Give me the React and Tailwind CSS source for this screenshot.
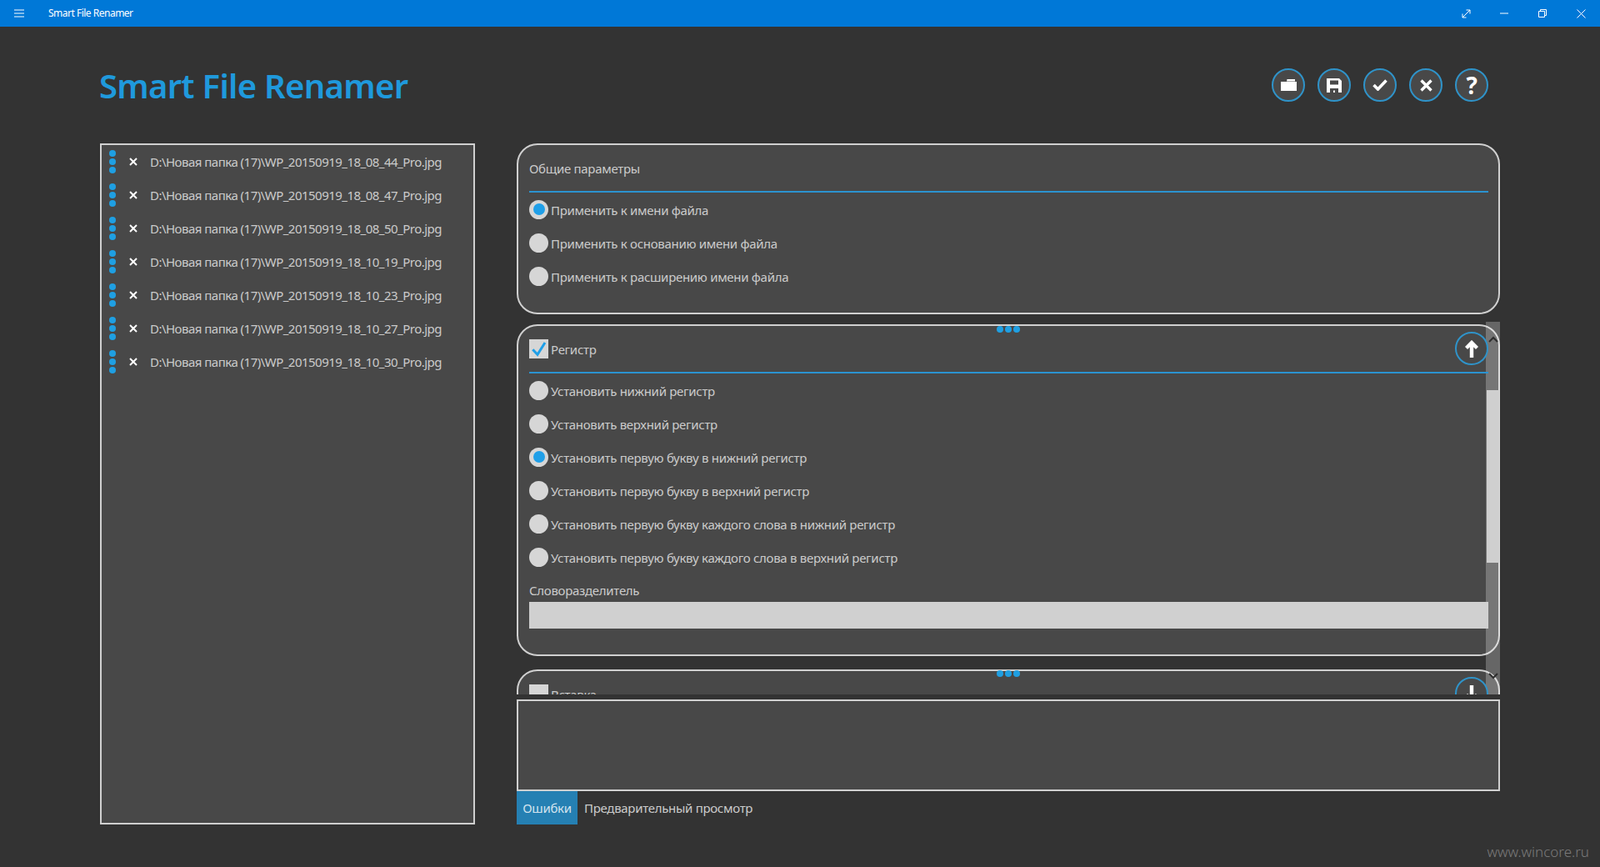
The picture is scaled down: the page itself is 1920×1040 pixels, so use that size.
const files = ["18_08_44", "18_08_47", "18_08_50", "18_10_19", "18_10_23", "18_10_27", "18_10_30"];

function Dots({ vertical }) {
  return (
    <div className={vertical ? "flex flex-col gap-[2px]" : "flex gap-[2px]"}>
      <span className="block size-2 rounded-full bg-[#1f9fe2]" />
      <span className="block size-2 rounded-full bg-[#1f9fe2]" />
      <span className="block size-2 rounded-full bg-[#1f9fe2]" />
    </div>
  );
}

function RoundButton({ children }) {
  return (
    <div className="relative z-10 flex size-10 items-center justify-center rounded-full border-2 border-[#2f93c9] bg-[#484848] text-white">
      {children}
    </div>
  );
}

function Radio({ label, checked }) {
  return (
    <div className="flex h-10 items-center gap-[3px]">
      <span className="flex size-[23px] shrink-0 items-center justify-center rounded-full bg-[#d6d6d6]">
        {checked && <span className="block size-[14px] rounded-full bg-[#1f9fe8]" />}
      </span>
      <span className="pt-px">{label}</span>
    </div>
  );
}

function Check({ checked }) {
  return (
    <span className="block size-[23px] shrink-0 bg-[#d6d6d6]">
      {checked && (
        <svg viewBox="0 0 23 23" className="size-[23px]">
          <path d="M4.3 12.3L10 18.3L19 4" fill="none" stroke="#1f9fe8" strokeWidth="3" />
        </svg>
      )}
    </span>
  );
}

function Arrow({ down }) {
  return (
    <svg viewBox="0 0 16 21" className={down ? "h-[21px] w-4 rotate-180" : "h-[21px] w-4"}>
      <path d="M8 21V3M1.5 9.5L8 3L14.5 9.5" fill="none" stroke="#fff" strokeWidth="4.4" />
    </svg>
  );
}

function GroupHeader({ label, checked, down }) {
  return (
    <div className="relative z-10 flex h-[57px] items-center gap-[3px] border-b-2 border-[#2b93d0] pb-px">
      <Check checked={checked} />
      <span className="flex-1 pt-[2px]">{label}</span>
      <RoundButton><Arrow down={down} /></RoundButton>
    </div>
  );
}

export default function App() {
  return (
    <div className="relative h-[1040px] w-full overflow-hidden bg-[#333333] text-[15px] leading-5 tracking-[-0.3px] text-[#cbcbcb] [font-family:'Open_Sans','Noto_Sans',sans-serif]">
      <div className="flex h-8 items-center bg-[#0078d7] text-white">
        <div className="flex h-8 w-[46px] items-center justify-center">
          <svg viewBox="0 0 12 10" className="h-[10px] w-3">
            <path d="M0 1H12M0 5H12M0 9H12" stroke="#fff" strokeWidth="1" />
          </svg>
        </div>
        <span className="ml-3 flex-1 text-xs tracking-[-0.5px]">Smart File Renamer</span>
        <div className="flex h-8 w-[46px] items-center justify-center">
          <svg viewBox="0 0 11 11" className="size-[11px]">
            <path d="M1 10L10 1M5.5 1H10V5.5M1 5.5V10H5.5" fill="none" stroke="#fff" strokeWidth="1" />
          </svg>
        </div>
        <div className="flex h-8 w-[46px] items-center justify-center">
          <svg viewBox="0 0 10 2" className="h-[2px] w-[10px]">
            <path d="M0 1H10" stroke="#fff" strokeWidth="1" />
          </svg>
        </div>
        <div className="flex h-8 w-[46px] items-center justify-center">
          <svg viewBox="0 0 10 10" className="size-[10px]">
            <path d="M.5 2.5H7.5V9.5H.5ZM2.5 2.5V.5H9.5V7.5H7.5" fill="none" stroke="#fff" strokeWidth="1" />
          </svg>
        </div>
        <div className="flex h-8 w-[46px] items-center justify-center">
          <svg viewBox="0 0 11 11" className="size-[11px]">
            <path d="M.5 .5L10.5 10.5M10.5 .5L.5 10.5" stroke="#fff" strokeWidth="1" />
          </svg>
        </div>
      </div>

      <div className="flex h-[140px] items-center justify-between pr-[134px] pl-[119px]">
        <h1 className="pt-[2px] text-[40px] leading-none font-semibold tracking-[-0.7px] text-[#1f99dc]">Smart File Renamer</h1>
        <div className="flex gap-[15px]">
          <RoundButton>
            <svg viewBox="0 0 19 14" className="h-[14px] w-[19px]">
              <path d="M7.5 0H17V2.4H7Z M0 3H19V14H0Z" fill="#fff" />
            </svg>
          </RoundButton>
          <RoundButton>
            <svg viewBox="0 0 18 17" className="h-[17px] w-[18px]">
              <path fillRule="evenodd" d="M0 0H15L18 3V17H0ZM4 2.5V7.5H14V2.5ZM4 12V17H14V12Z" fill="#fff" />
              <path d="M8 14.5H10V17H8Z" fill="#fff" />
            </svg>
          </RoundButton>
          <RoundButton>
            <svg viewBox="0 0 18 14" className="h-[14px] w-[18px]">
              <path d="M1.5 7L6.5 12L16.5 1.5" fill="none" stroke="#fff" strokeWidth="3.6" />
            </svg>
          </RoundButton>
          <RoundButton>
            <svg viewBox="0 0 15 15" className="size-[15px]">
              <path d="M1.5 1.5L13.5 13.5M13.5 1.5L1.5 13.5" stroke="#fff" strokeWidth="3.4" />
            </svg>
          </RoundButton>
          <RoundButton>
            <span className="text-[28px] leading-none font-bold">?</span>
          </RoundButton>
        </div>
      </div>

      <div className="flex gap-[50px] pl-[120px]">
        <div className="h-[817px] w-[450px] border-2 border-[#d0d0d0] bg-[#484848]">
          {files.map((f) => (
            <div key={f} className="flex h-10 items-center">
              <div className="ml-[9px]"><Dots vertical /></div>
              <svg viewBox="0 0 10 10" className="ml-4 size-[10px]">
                <path d="M1 1L9 9M9 1L1 9" stroke="#fff" strokeWidth="2" />
              </svg>
              <span className="ml-[15px] whitespace-nowrap tracking-[-0.52px]">{`D:\\Новая папка (17)\\WP_20150919_${f}_Pro.jpg`}</span>
            </div>
          ))}
        </div>

        <div className="w-[1180px]">
          <div className="h-[205px] rounded-[25px] border-2 border-[#d0d0d0] bg-[#484848] pr-3 pl-[13px]">
            <div className="flex h-[57px] items-center border-b-2 border-[#2b93d0]">Общие параметры</div>
            <Radio label="Применить к имени файла" checked />
            <Radio label="Применить к основанию имени файла" />
            <Radio label="Применить к расширению имени файла" />
          </div>

          <div className="relative mt-[9px] h-[447px] overflow-hidden pt-[3px]">
            <div className="relative h-[398px] rounded-[25px] border-2 border-[#d0d0d0] bg-[#484848] pr-3 pl-[13px]">
              <div className="absolute top-0 left-1/2 -translate-x-1/2"><Dots /></div>
              <GroupHeader label="Регистр" checked />
              <Radio label="Установить нижний регистр" />
              <Radio label="Установить верхний регистр" />
              <Radio label="Установить первую букву в нижний регистр" checked />
              <Radio label="Установить первую букву в верхний регистр" />
              <Radio label="Установить первую букву каждого слова в нижний регистр" />
              <Radio label="Установить первую букву каждого слова в верхний регистр" />
              <div className="pt-[10px] pb-[4px]">Словоразделитель</div>
              <div className="relative z-10 h-8 bg-[#d0d0d0]" />
            </div>

            <div className="relative mt-4 h-[200px] rounded-[25px] border-2 border-[#d0d0d0] bg-[#484848] pr-3 pl-[13px]">
              <div className="absolute -top-px left-1/2 -translate-x-1/2"><Dots /></div>
              <GroupHeader label="Вставка" down />
            </div>

            <div className="absolute top-0 right-0 flex h-full w-[17px] flex-col items-center bg-white/25">
              <svg viewBox="0 0 12 8" className="mt-[17px] h-2 w-3">
                <path d="M1 7L6 2L11 7" fill="none" stroke="#2e2e2e" strokeWidth="2" />
              </svg>
              <div className="mt-[57px] h-[207px] w-[15px] bg-[#cfcfcf]" />
              <svg viewBox="0 0 12 8" className="mt-[132px] h-2 w-3">
                <path d="M1 1L6 6L11 1" fill="none" stroke="#2e2e2e" strokeWidth="2" />
              </svg>
            </div>
          </div>

          <div className="mt-[6px] h-[110px] border-2 border-[#d0d0d0] bg-[#484848]" />
          <div className="flex h-10 items-center">
            <div className="flex h-10 w-[73px] items-center justify-center bg-[#2580b3] text-[#d3e3ee]">Ошибки</div>
            <span className="ml-2">Предварительный просмотр</span>
          </div>
        </div>
      </div>

      <span className="absolute right-[13px] bottom-[8px] text-[17px] font-light tracking-normal text-[#7a7a7a]">www.wincore.ru</span>
    </div>
  );
}
